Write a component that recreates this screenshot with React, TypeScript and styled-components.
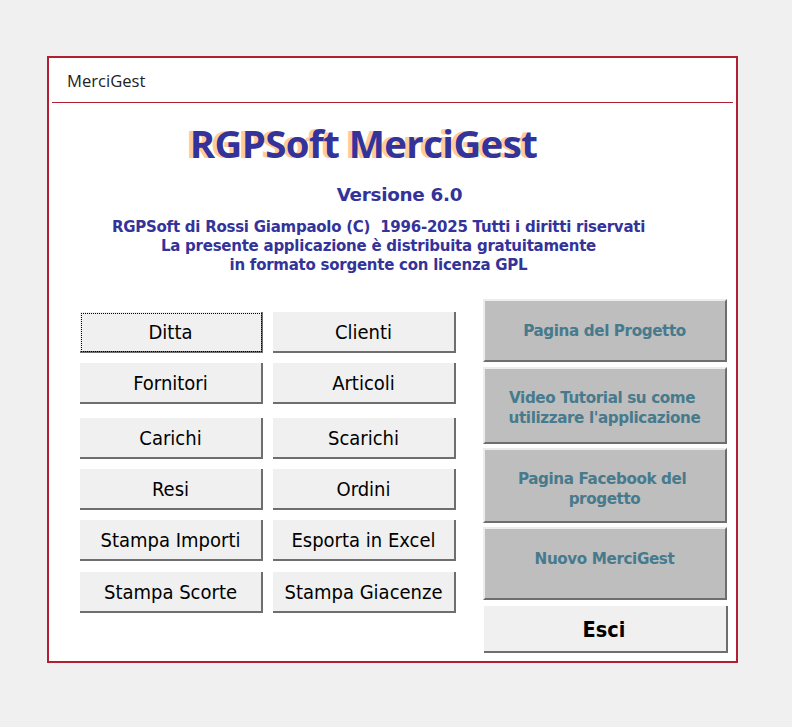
import React from "react";
import styled, { createGlobalStyle } from "styled-components";

const Global = createGlobalStyle`
  html, body { margin: 0; padding: 0; background: #f0f0f0; }
  body { width: 792px; height: 727px; overflow: hidden; font-family: "DejaVu Sans", sans-serif; }
`;

const Frame = styled.main`
  box-sizing: border-box;
  width: 691px;
  height: 607px;
  margin: 56px 0 0 47px;
  border: 2px solid #b01f33;
  background: #fff;
  padding: 0 3px;
  display: flex;
  flex-direction: column;
`;

const Header = styled.header`
  box-sizing: border-box;
  height: 45px;
  padding: 13px 0 0 15px;
  border-bottom: 1px solid #b01f33;
  font: 400 16.6px/20px "Open Sans", sans-serif;
  color: #222;
`;

const Hero = styled.section`
  height: 196px;
  display: flex;
  flex-direction: column;
  align-items: center;
`;

const Title = styled.h1`
  margin: 16px 0 0 -58px;
  font: 700 38.4px/48px "Open Sans", sans-serif;
  letter-spacing: -0.6px;
  color: #33339a;
  text-shadow: -4px 0 0 #ffcc99;
  white-space: nowrap;
`;

const Version = styled.h2`
  margin: 17px 0 0 14px;
  font: 700 18.4px/22px "DejaVu Sans", sans-serif;
  letter-spacing: -0.3px;
  color: #33339a;
`;

const Tagline = styled.p`
  margin: 12px 0 0 -28px;
  font: 700 15px/19px "DejaVu Sans", sans-serif;
  letter-spacing: -0.25px;
  color: #33339a;
  text-align: center;
  white-space: pre;
`;

const Panels = styled.section`
  display: flex;
  align-items: flex-start;
  padding-left: 28px;
`;

const LeftGrid = styled.div`
  width: 376px;
  margin-top: 13px;
  display: grid;
  grid-template-columns: 183px 183px;
  column-gap: 10px;
`;

const FormButton = styled.button<{ $gap: number; $focused?: boolean }>`
  box-sizing: border-box;
  height: 41px;
  margin-bottom: ${(p) => p.$gap}px;
  padding: 0;
  background: #f0f0f0;
  border: 0;
  border-right: 2px solid #6e6e6e;
  border-bottom: 2px solid #6e6e6e;
  font: 400 20px/1 "DejaVu Sans Condensed", "Open Sans", sans-serif;
  color: #000;
  outline: ${(p) => (p.$focused ? "1px dotted #000" : "none")};
  outline-offset: ${(p) => (p.$focused ? "-2px" : "0")};
`;

const RightColumn = styled.div`
  margin-left: 27px;
  width: 244px;
  display: flex;
  flex-direction: column;
`;

const LinkButton = styled.button<{ $height: number; $gap: number; $shift: number }>`
  box-sizing: border-box;
  height: ${(p) => p.$height}px;
  margin-bottom: ${(p) => p.$gap}px;
  padding: ${(p) => Math.max(0, p.$shift * 2)}px 1px ${(p) => Math.max(0, -p.$shift * 2)}px 0;
  background: #bebebe;
  border: 0;
  border-top: 2px solid #ececec;
  border-left: 2px solid #ececec;
  border-right: 2px solid #6e6e6e;
  border-bottom: 2px solid #6e6e6e;
  font: 700 15.2px/20px "DejaVu Sans", sans-serif;
  letter-spacing: -0.4px;
  color: #467a8c;
  white-space: pre;
`;

const ExitButton = styled.button`
  box-sizing: border-box;
  width: 244px;
  height: 47px;
  margin-left: 1px;
  padding: 2px 2px 0 0;
  background: #f0f0f0;
  border: 0;
  border-right: 2px solid #6e6e6e;
  border-bottom: 2px solid #6e6e6e;
  font: 700 21.5px/1 "DejaVu Sans Condensed", "Open Sans", sans-serif;
  color: #000;
`;

const left: { label: string; gap: number; focused?: boolean }[] = [
  { label: "Ditta", gap: 10, focused: true },
  { label: "Clienti", gap: 10 },
  { label: "Fornitori", gap: 14 },
  { label: "Articoli", gap: 14 },
  { label: "Carichi", gap: 10 },
  { label: "Scarichi", gap: 10 },
  { label: "Resi", gap: 10 },
  { label: "Ordini", gap: 10 },
  { label: "Stampa Importi", gap: 11 },
  { label: "Esporta in Excel", gap: 11 },
  { label: "Stampa Scorte", gap: 0 },
  { label: "Stampa Giacenze", gap: 0 },
];

const right = [
  { label: "Pagina del Progetto", height: 63, gap: 5, shift: 0 },
  { label: "Video Tutorial su come \nutilizzare l'applicazione", height: 77, gap: 4, shift: 2 },
  { label: "Pagina Facebook del \nprogetto", height: 75, gap: 4, shift: 3 },
  { label: "Nuovo MerciGest", height: 73, gap: 6, shift: -5 },
];

export default function App() {
  return (
    <>
      <Global />
      <Frame>
        <Header>MerciGest</Header>
        <Hero>
          <Title>RGPSoft MerciGest</Title>
          <Version>Versione 6.0</Version>
          <Tagline>
            {"RGPSoft di Rossi Giampaolo (C)  1996-2025 Tutti i diritti riservati\nLa presente applicazione è distribuita gratuitamente\nin formato sorgente con licenza GPL"}
          </Tagline>
        </Hero>
        <Panels>
          <LeftGrid>
            {left.map((b) => (
              <FormButton key={b.label} $gap={b.gap} $focused={b.focused}>
                {b.label}
              </FormButton>
            ))}
          </LeftGrid>
          <RightColumn>
            {right.map((b) => (
              <LinkButton key={b.label} $height={b.height} $gap={b.gap} $shift={b.shift}>
                {b.label}
              </LinkButton>
            ))}
            <ExitButton>Esci</ExitButton>
          </RightColumn>
        </Panels>
      </Frame>
    </>
  );
}
